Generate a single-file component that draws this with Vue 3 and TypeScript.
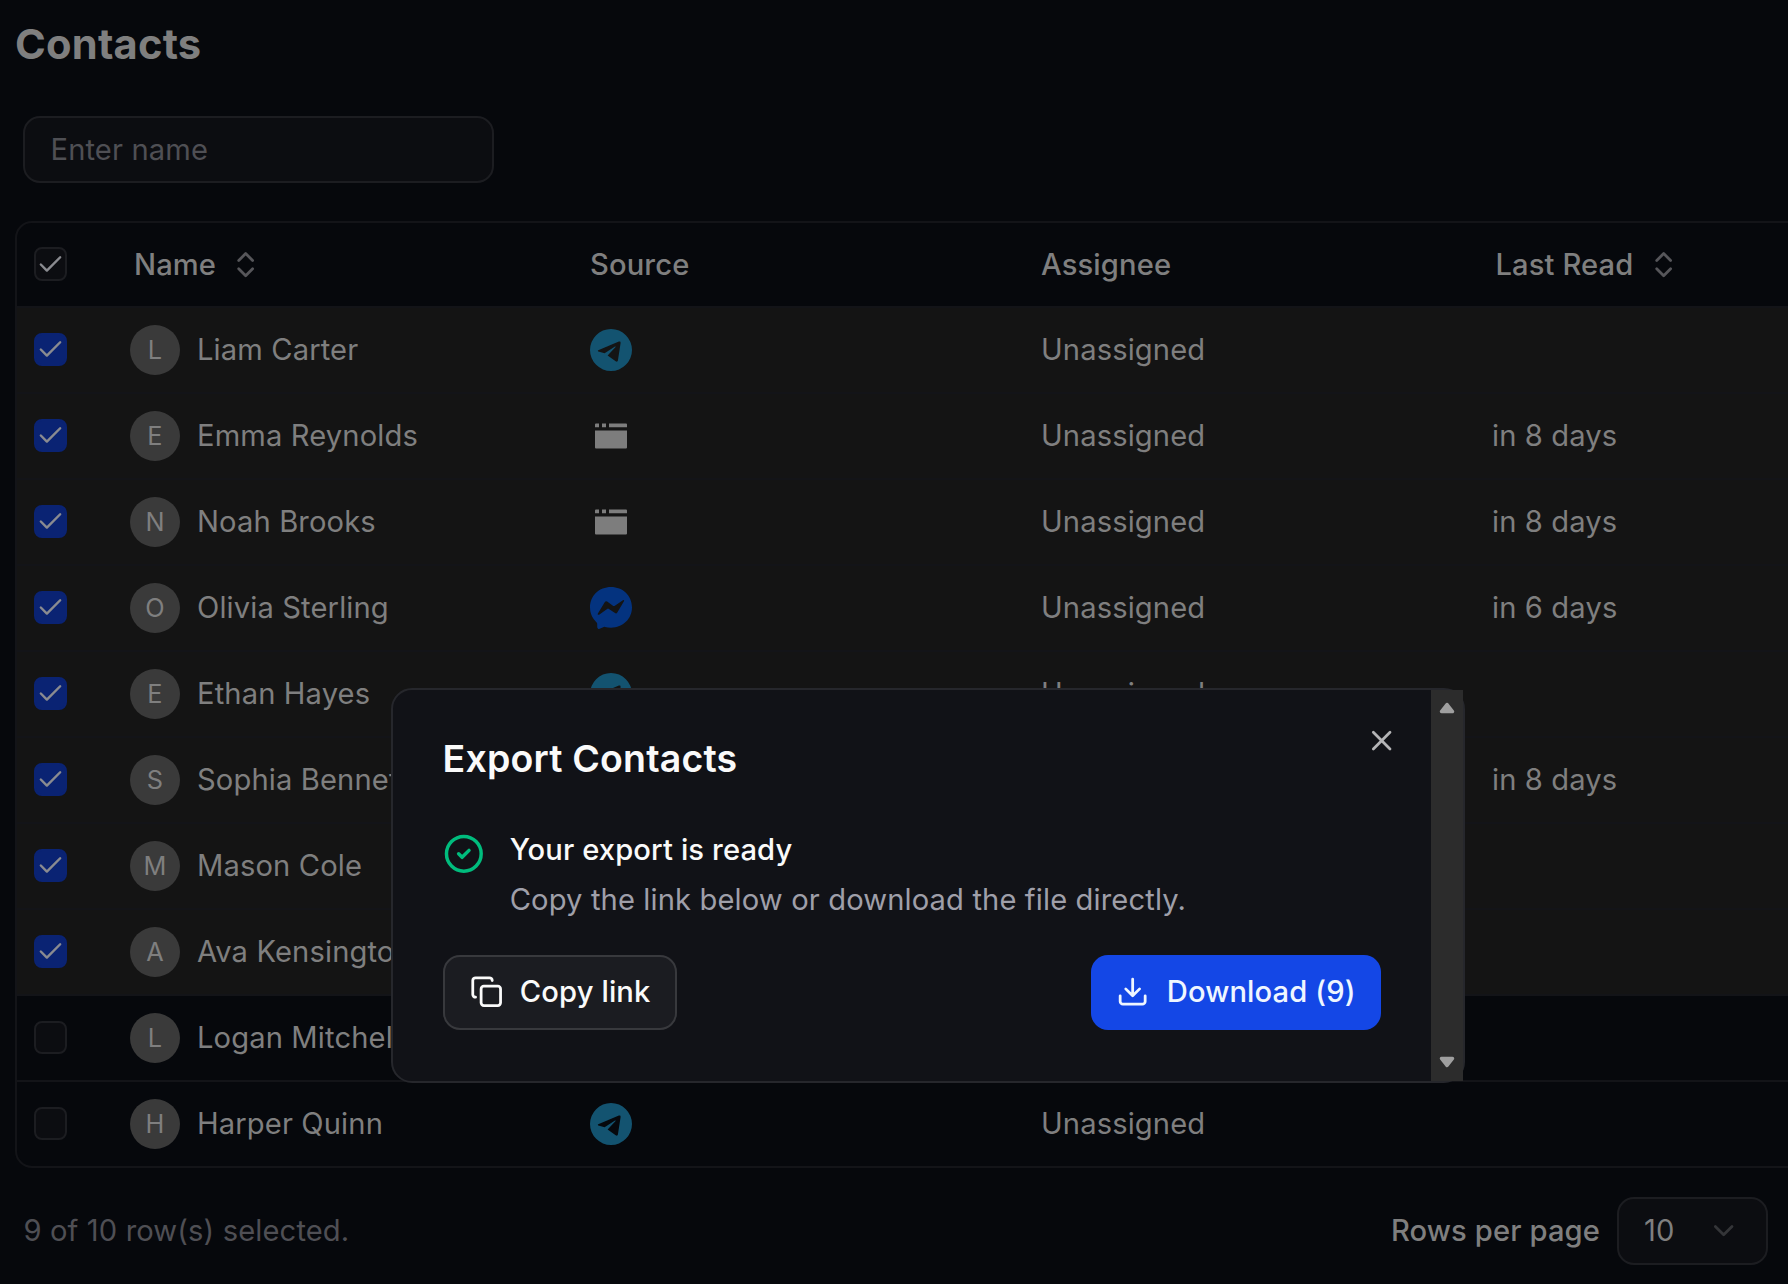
<script setup lang="ts">
type Source = 'telegram' | 'web' | 'messenger'

interface Contact {
  name: string
  source: Source
  assignee: string
  lastRead: string
  selected: boolean
}

const contacts: Contact[] = [
  { name: 'Liam Carter', source: 'telegram', assignee: 'Unassigned', lastRead: '', selected: true },
  { name: 'Emma Reynolds', source: 'web', assignee: 'Unassigned', lastRead: 'in 8 days', selected: true },
  { name: 'Noah Brooks', source: 'web', assignee: 'Unassigned', lastRead: 'in 8 days', selected: true },
  { name: 'Olivia Sterling', source: 'messenger', assignee: 'Unassigned', lastRead: 'in 6 days', selected: true },
  { name: 'Ethan Hayes', source: 'telegram', assignee: 'Unassigned', lastRead: '', selected: true },
  { name: 'Sophia Bennett', source: 'web', assignee: 'Unassigned', lastRead: 'in 8 days', selected: true },
  { name: 'Mason Cole', source: 'telegram', assignee: 'Unassigned', lastRead: '', selected: true },
  { name: 'Ava Kensington', source: 'telegram', assignee: 'Unassigned', lastRead: '', selected: true },
  { name: 'Logan Mitchell', source: 'telegram', assignee: 'Unassigned', lastRead: '', selected: false },
  { name: 'Harper Quinn', source: 'telegram', assignee: 'Unassigned', lastRead: '', selected: false },
]
</script>

<template>
  <div class="page">
    <h1 class="title">Contacts</h1>
    <div class="search"><span>Enter name</span></div>

    <div class="table">
      <div class="row head">
        <div class="cell-check">
          <span class="box">
            <svg class="check" viewBox="0 0 24 24"><path d="M20 6 9 17l-5-5" /></svg>
          </span>
        </div>
        <div class="th padded">
          <span>Name</span>
          <svg class="sort" viewBox="0 0 24 24"><path d="m7 15 5 5 5-5M7 9l5-5 5 5" /></svg>
        </div>
        <div class="th">Source</div>
        <div class="th">Assignee</div>
        <div class="th padded last">
          <span>Last Read</span>
          <svg class="sort" viewBox="0 0 24 24"><path d="m7 15 5 5 5-5M7 9l5-5 5 5" /></svg>
        </div>
      </div>

      <div v-for="c in contacts" :key="c.name" class="row body" :class="{ selected: c.selected }">
        <div class="cell-check">
          <span class="box" :class="{ on: c.selected }">
            <svg v-if="c.selected" class="check" viewBox="0 0 24 24"><path d="M20 6 9 17l-5-5" /></svg>
          </span>
        </div>
        <div class="person">
          <span class="avatar">{{ c.name[0] }}</span>
          <span class="name">{{ c.name }}</span>
        </div>
        <div class="source">
          <svg v-if="c.source === 'telegram'" viewBox="0 0 42 42">
            <path
              fill="#135370"
              fill-rule="evenodd"
              d="M21 0a21 21 0 1 1 0 42a21 21 0 1 1 0-42zM8.2 21.2L28.9 12.6q1.9-.5 1.7 1.3L27.9 31.5q-.5 1.9-2.2.7L17.6 26.5L25.6 18.1q.3-.9-.6-.5L14.6 24.3L8.3 22.6q-1.1-.6-.1-1.4z"
            />
          </svg>
          <svg v-else-if="c.source === 'web'" viewBox="0 0 42 42">
            <path
              fill="#7d7d7d"
              d="M6 8.5h3v3.7H5V9.5a1 1 0 0 1 1-1zM12 8.5h4v3.7h-4zM19 8.5h17a1 1 0 0 1 1 1v2.7H19zM5 15.4h32v17a1 1 0 0 1-1 1H6a1 1 0 0 1-1-1z"
            />
          </svg>
          <svg v-else viewBox="0 0 24 24">
            <path
              fill="#04337f"
              fill-rule="evenodd"
              d="M12 0C5.24 0 0 4.952 0 11.64c0 3.499 1.434 6.521 3.769 8.61a.96.96 0 0 1 .323.683l.065 2.135a.96.96 0 0 0 1.347.85l2.381-1.053a.96.96 0 0 1 .641-.046c1.094.3 2.259.461 3.474.461 6.76 0 12-4.952 12-11.64S18.76 0 12 0zM4.5 15.1L8.5 8.6q.5-.8 1.3-.3L13.3 10.8q.3.2.7 0L18.8 7.5q1-.4.6.6L15.6 14.5q-.5.9-1.3.4L10.6 12.4q-.3-.2-.6 0L5.2 15.8q-1 .4-.7-.7z"
            />
          </svg>
        </div>
        <div>{{ c.assignee }}</div>
        <div>{{ c.lastRead }}</div>
      </div>
    </div>

    <div class="footer">
      <span class="count">9 of 10 row(s) selected.</span>
      <div class="pager">
        <span class="rpp">Rows per page</span>
        <div class="select">
          <span>10</span>
          <svg viewBox="0 0 24 24"><path d="m6 9 6 6 6-6" /></svg>
        </div>
      </div>
    </div>

    <div class="dialog">
      <div class="content">
        <h2>Export Contacts</h2>
        <div class="status">
          <svg class="ok" viewBox="0 0 24 24"><circle cx="12" cy="12" r="10" /><path d="m9 12 2 2 4-4" /></svg>
          <div>
            <p class="lead">Your export is ready</p>
            <p class="sub">Copy the link below or download the file directly.</p>
          </div>
        </div>
        <div class="actions">
          <button class="btn outline">
            <svg viewBox="0 0 24 24">
              <rect x="8" y="8" width="14" height="14" rx="2" />
              <path d="M4 16c-1.1 0-2-.9-2-2V4c0-1.1.9-2 2-2h10c1.1 0 2 .9 2 2" />
            </svg>
            <span>Copy link</span>
          </button>
          <button class="btn primary">
            <svg viewBox="0 0 24 24">
              <path d="M12 15V3M21 15v4a2 2 0 0 1-2 2H5a2 2 0 0 1-2-2v-4M7 10l5 5 5-5" />
            </svg>
            <span>Download (9)</span>
          </button>
        </div>
        <svg class="close" viewBox="0 0 24 24"><path d="M18 6 6 18M6 6l12 12" /></svg>
      </div>
      <div class="scrollbar">
        <svg viewBox="0 0 16 12"><path d="M8 2.5 13.5 9.5h-11z" /></svg>
        <svg viewBox="0 0 16 12"><path d="M2.5 2.5h11L8 9.5z" /></svg>
      </div>
    </div>
  </div>
</template>

<style>
body {
  background: #06080c;
}
</style>

<style scoped>
.page {
  position: relative;
  box-sizing: border-box;
  width: 1788px;
  height: 1284px;
  overflow: hidden;
  background: #06080c;
  color: #7f7f7f;
  font-family: Inter, sans-serif;
  font-size: 29.17px;
  letter-spacing: 0.12px;
  line-height: 42px;
  white-space: nowrap;
}
.page * {
  box-sizing: border-box;
}
svg {
  display: block;
  flex: none;
  fill: none;
  stroke-linecap: round;
  stroke-linejoin: round;
}
.title {
  margin: 0;
  padding: 15px 0 0 15px;
  height: 116px;
  font-size: 41.67px;
  font-weight: 700;
  letter-spacing: 0.2px;
  line-height: 58px;
}
.search {
  display: flex;
  align-items: center;
  margin-left: 23px;
  width: 471px;
  height: 67px;
  padding-left: 25.5px;
  border: 2px solid #1c1d21;
  border-radius: 17px;
  background: #0c0d11;
  color: #4f4f54;
}
.table {
  margin: 38px 0 0 15px;
  width: 1900px;
  border: 2px solid #131418;
  border-radius: 17px;
  overflow: hidden;
}
.row {
  display: grid;
  grid-template-columns: 113px 460px 451px 451px 1fr;
  align-items: center;
}
.head {
  height: 83px;
  font-weight: 500;
}
.body {
  height: 86px;
  border-top: 2px solid #131418;
}
.selected {
  background: #141414;
}
.cell-check {
  padding-left: 17px;
}
.box {
  display: flex;
  align-items: center;
  justify-content: center;
  width: 33px;
  height: 33px;
  margin-bottom: 1px;
  border: 2px solid #1c1d21;
  border-radius: 8px;
  background: #0c0d11;
}
.head .box {
  height: 34px;
}
.box.on {
  border-color: #0a2373;
  background: #0a2373;
}
.check {
  width: 29px;
  height: 29px;
  stroke: #8a8b90;
  stroke-width: 2;
}
.th {
  display: flex;
  align-items: center;
}
.padded {
  padding-left: 4px;
  gap: 12.5px;
}
.padded.last {
  padding-left: 3.4px;
  gap: 13.5px;
}
.sort {
  width: 33.33px;
  height: 33.33px;
  stroke: #56565a;
  stroke-width: 2;
}
.person {
  display: flex;
  align-items: center;
  gap: 17px;
}
.avatar {
  width: 50px;
  height: 50px;
  border-radius: 50%;
  background: #3a3a3a;
  text-align: center;
  font-size: 25.3px;
  line-height: 49px;
}
.source svg {
  width: 42px;
  height: 42px;
}
.footer {
  display: flex;
  align-items: center;
  justify-content: space-between;
  padding: 29px 20px 0 23.5px;
}
.count {
  color: #4f4f54;
}
.pager {
  display: flex;
  align-items: center;
  gap: 17px;
}
.rpp {
  font-weight: 500;
}
.select {
  display: flex;
  align-items: center;
  justify-content: space-between;
  width: 151px;
  height: 68px;
  padding: 0 26px 0 25px;
  border: 2px solid #1c1d21;
  border-radius: 17px;
  background: #0c0d11;
}
.select svg {
  width: 33.33px;
  height: 33.33px;
  stroke: #343538;
  stroke-width: 2;
}
.dialog {
  position: absolute;
  left: 391px;
  top: 688px;
  display: flex;
  width: 1074px;
  height: 395px;
  border: 2px solid #26272c;
  border-radius: 21px;
  background: #111217;
}
.content {
  position: relative;
  flex: 1;
  padding: 50px 50.5px 0 49.5px;
}
h2 {
  margin: 0;
  color: #fafafa;
  font-size: 37.5px;
  font-weight: 600;
  letter-spacing: 0.17px;
  line-height: 38px;
}
.status {
  display: flex;
  gap: 25.5px;
  margin-top: 49px;
}
.ok {
  width: 41.67px;
  height: 41.67px;
  margin-top: 6px;
  stroke: #00bc7d;
  stroke-width: 2;
}
.status p {
  margin: 0;
}
.status .lead {
  margin-top: 2px;
  color: #fafafa;
  font-weight: 500;
}
.status .sub {
  margin-top: 8px;
  color: #9f9fa9;
}
.actions {
  display: flex;
  justify-content: space-between;
  margin-top: 33.6px;
}
.btn {
  display: flex;
  align-items: center;
  gap: 17px;
  height: 75px;
  border: 0;
  border-radius: 17px;
  font: inherit;
  font-weight: 500;
  letter-spacing: inherit;
}
.btn svg {
  width: 33.33px;
  height: 33.33px;
  stroke: currentColor;
  stroke-width: 2;
}
.outline {
  padding: 0 25px;
  border: 2px solid #38393d;
  background: #1b1c21;
  color: #fafafa;
}
.primary {
  padding: 0 25px;
  background: #1447e6;
  color: #eff6ff;
}
.close {
  position: absolute;
  right: 33px;
  top: 34px;
  width: 33.33px;
  height: 33.33px;
  stroke: #b4b4b6;
  stroke-width: 2;
}
.scrollbar {
  display: flex;
  flex-direction: column;
  justify-content: space-between;
  align-items: center;
  width: 32px;
  padding: 12px 0 13.5px 0.5px;
  background: #2c2c2c;
}
.scrollbar svg {
  width: 16px;
  height: 12px;
  fill: #9f9f9f;
  stroke: #9f9f9f;
  stroke-width: 3.5;
}
</style>
